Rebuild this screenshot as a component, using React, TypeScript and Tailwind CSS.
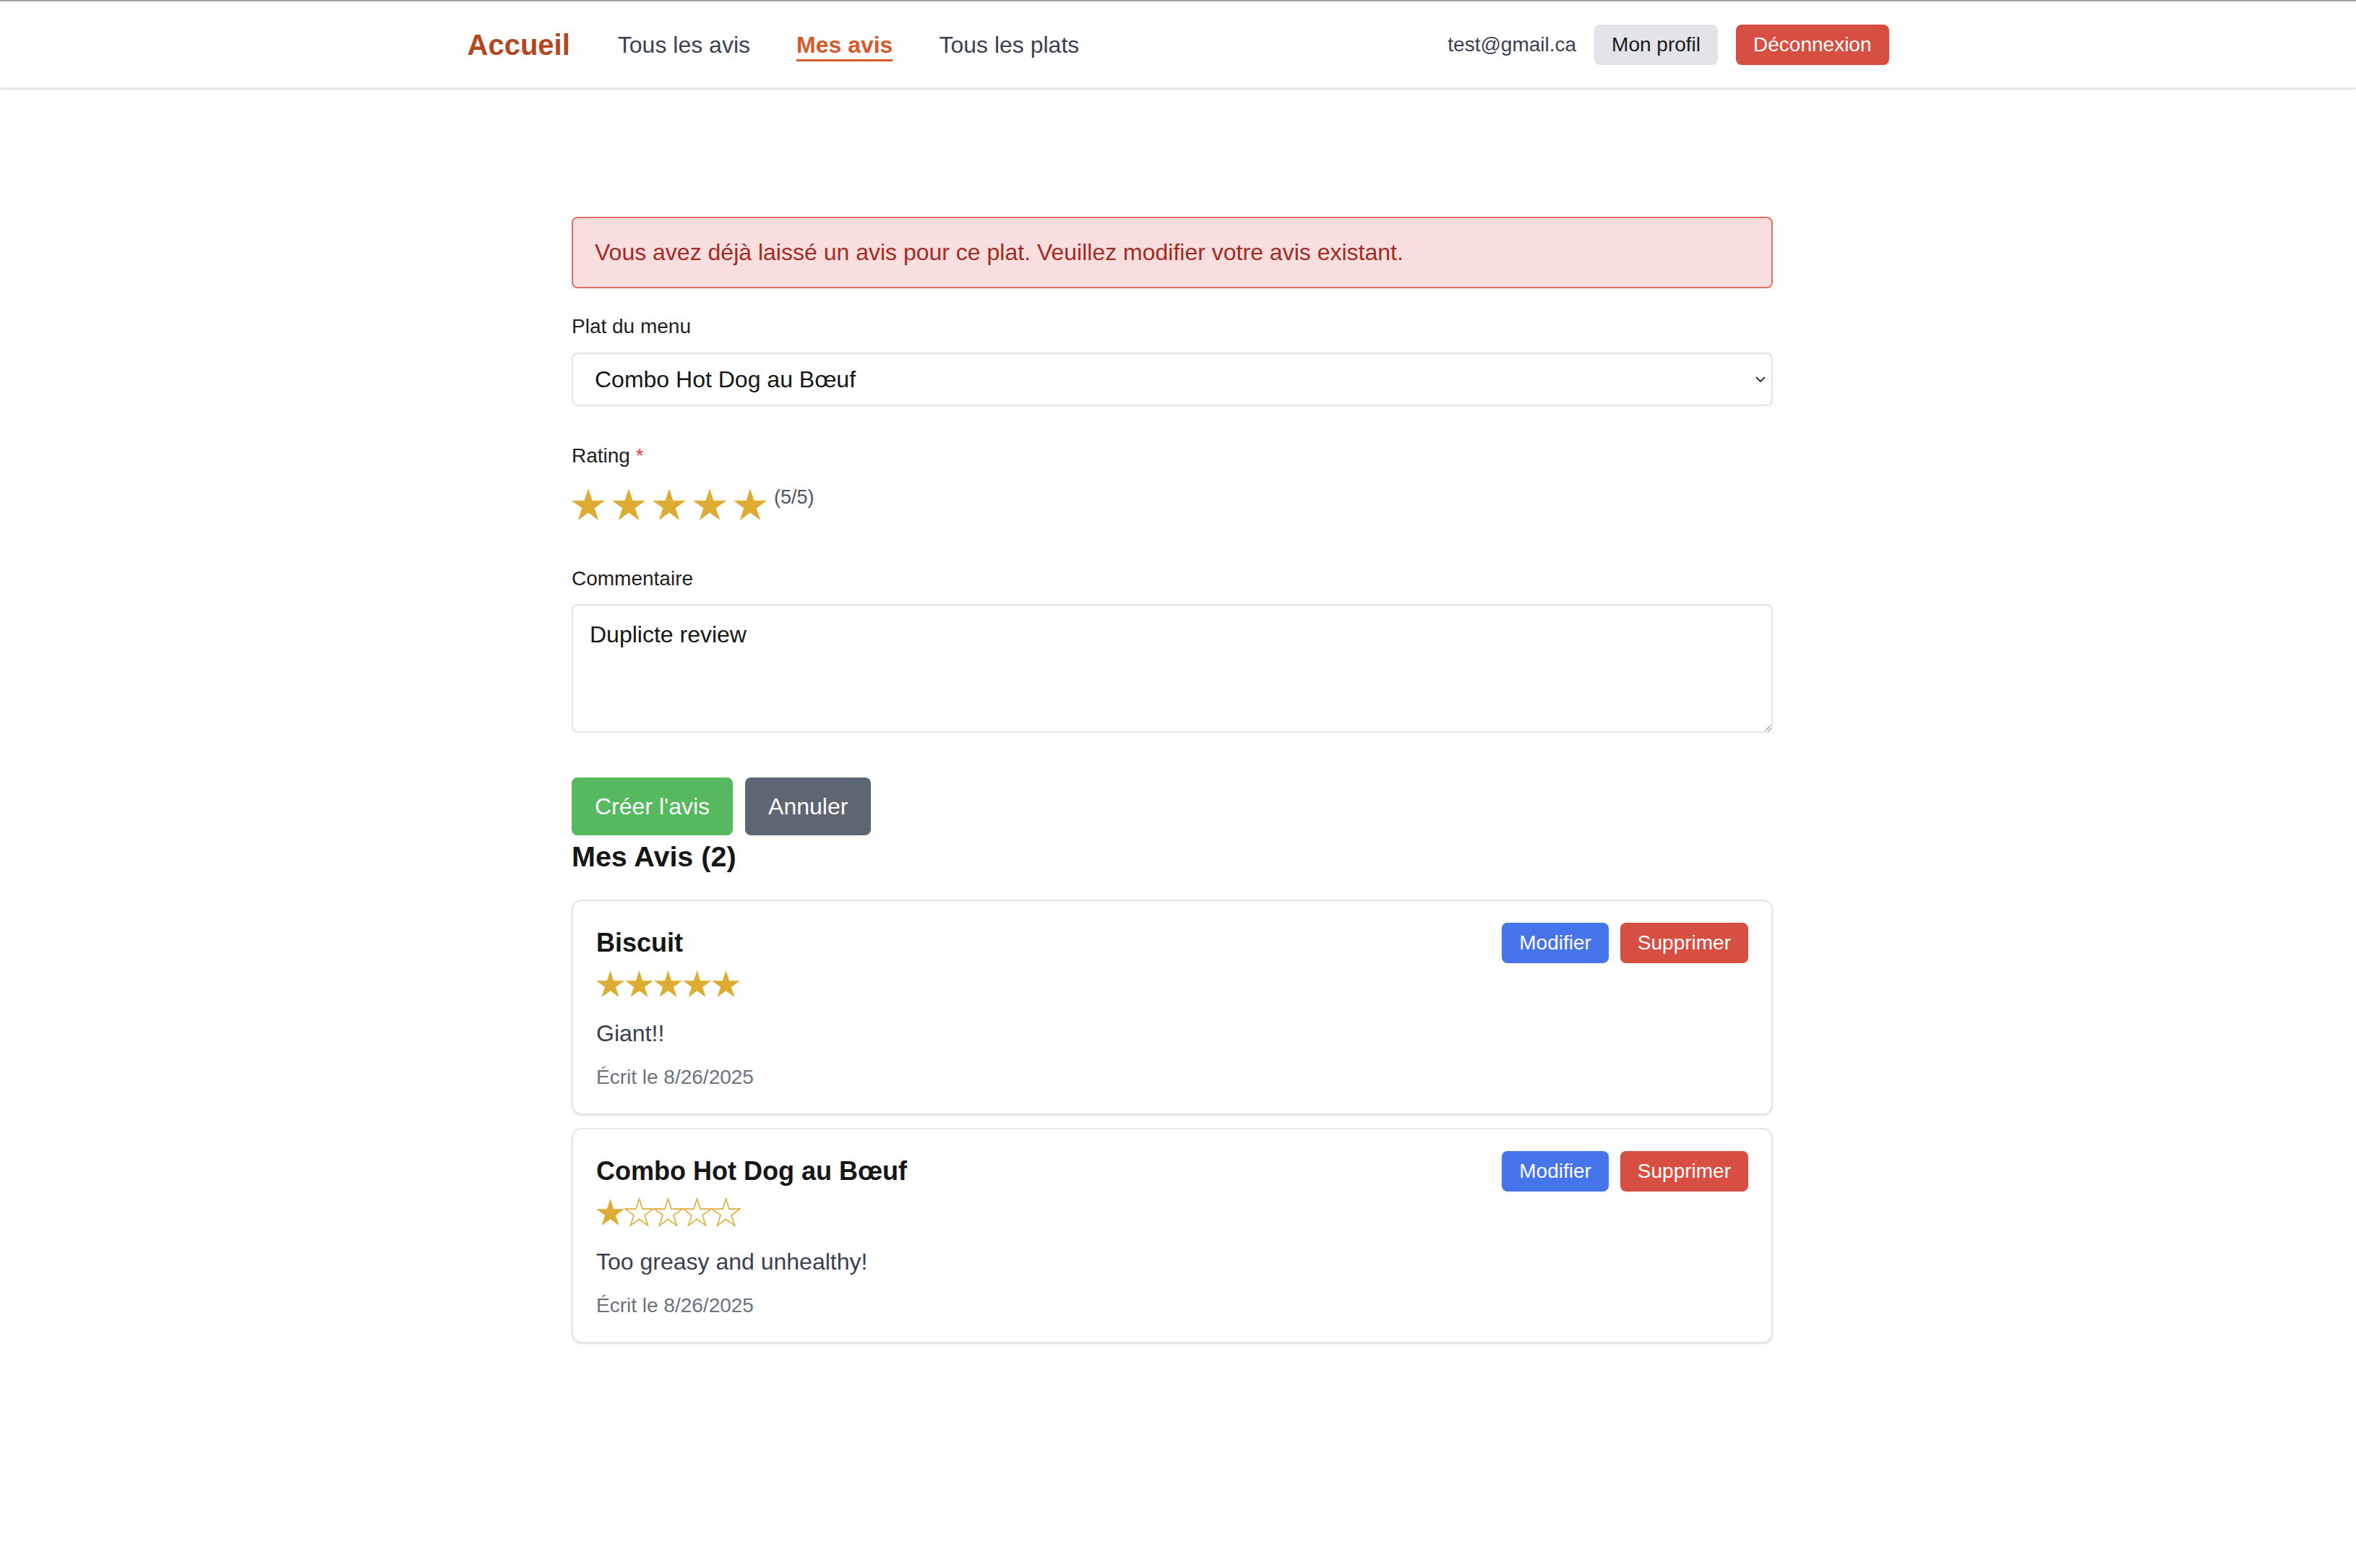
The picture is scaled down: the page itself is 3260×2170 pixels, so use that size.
import { useState } from 'react';

type Review = {
    id: number;
    dish: string;
    rating: number;
    comment: string;
    date: string;
};

const reviews: Review[] = [
    { id: 1, dish: 'Biscuit', rating: 5, comment: 'Giant!!', date: '8/26/2025' },
    { id: 2, dish: 'Combo Hot Dog au Bœuf', rating: 1, comment: 'Too greasy and unhealthy!', date: '8/26/2025' },
];

const STAR_POINTS = '50,0 61.8,36.3 100,36.3 69.1,58.8 80.9,95.1 50,72.6 19.1,95.1 30.9,58.8 0,36.3 38.2,36.3';

const Star = ({ filled, className }: { filled: boolean; className: string }) => (
    <svg viewBox="0 0 100 95" className={`overflow-visible ${className}`}>
        <polygon
            points={STAR_POINTS}
            fill={filled ? '#dfac33' : '#ffffff'}
            stroke="#dfac33"
            strokeWidth={filled ? 0 : 4}
        />
    </svg>
);

const Header = () => (
    <header className="bg-white border-b-2 border-[#e4e4ea] shadow-sm">
        <div className="h-[2px] bg-[#a3a89f]" />
        <nav className="w-[1967px] h-[119px] mx-auto flex items-center justify-between">
            <div className="flex items-center gap-[66px]">
                <span className="text-[40px] leading-[56px] font-bold text-[#b1461f]">Accueil</span>
                <div className="flex items-center gap-[64px] pt-[4px]">
                    <span className="text-[32px] leading-[40px] border-b-[3px] border-transparent text-[#3a4150]">Tous les avis</span>
                    <span className="text-[32px] leading-[40px] border-b-[3px] border-[#d65a28] font-bold text-[#d65a28]">Mes avis</span>
                    <span className="text-[32px] leading-[40px] border-b-[3px] border-transparent text-[#3a4150]">Tous les plats</span>
                </div>
            </div>
            <div className="flex items-center gap-[25px]">
                <span className="text-[28px] leading-[40px] text-[#3a4150]">test@gmail.ca</span>
                <button className="px-[24px] py-[8px] text-[28px] leading-[40px] rounded-[8px] bg-[#e2e4e9] text-[#1a1a1a]">Mon profil</button>
                <button className="px-[24px] py-[8px] text-[28px] leading-[40px] rounded-[8px] bg-[#d64f42] text-white">Déconnexion</button>
            </div>
        </nav>
    </header>
);

const ReviewCard = ({ review }: { review: Review }) => (
    <div className="bg-white border-2 border-[#e5e5ea] rounded-[14px] shadow-sm px-[32px] pt-[30px] pb-[30px]">
        <div className="flex items-start justify-between">
            <h3 className="text-[36px] leading-[56px] font-bold text-[#161616]">{review.dish}</h3>
            <div className="flex gap-[16px]">
                <button className="px-[24px] py-[8px] text-[28px] leading-[40px] rounded-[8px] bg-[#4674ea] text-white">Modifier</button>
                <button className="px-[24px] py-[8px] text-[28px] leading-[40px] rounded-[8px] bg-[#d64f42] text-white">Supprimer</button>
            </div>
        </div>
        <div className="flex gap-[1px] mt-[10px]">
            {[1, 2, 3, 4, 5].map(n => (
                <Star key={n} filled={n <= review.rating} className="w-[39px] h-[37px]" />
            ))}
        </div>
        <p className="mt-[26px] text-[32px] leading-[48px] text-[#374151]">{review.comment}</p>
        <p className="mt-[17px] text-[28px] leading-[40px] text-[#6b7280]">Écrit le {review.date}</p>
    </div>
);

const App = () => {
    const [rating, setRating] = useState(5);

    return (
        <div className="min-h-screen bg-white text-[#1f1f1f]" style={{ fontFamily: '"Liberation Sans", Arial, sans-serif' }}>
            <Header />

            <main className="flex justify-center pr-[16px] pt-[177px] pb-[120px]">
                <div className="w-[1662px]">
                    {/* Error */}
                    <div className="border-2 border-[#e76d69] bg-[#f8dede] rounded-[8px] px-[30px] py-[24px] text-[32px] leading-[47px] text-[#a52a22]">
                        Vous avez déjà laissé un avis pour ce plat. Veuillez modifier votre avis existant.
                    </div>

                    {/* Form */}
                    <label className="block mt-[33px] text-[28px] leading-[40px] text-[#1f1f1f]">Plat du menu</label>
                    <div className="relative mt-[16px]">
                        <select
                            className="w-full appearance-none bg-white border-2 border-[#e3e3e8] rounded-[8px] px-[30px] py-[11px] text-[32px] leading-[48px] text-[#161616]"
                            defaultValue="combo"
                        >
                            <option value="biscuit">Biscuit</option>
                            <option value="combo">Combo Hot Dog au Bœuf</option>
                        </select>
                        <svg viewBox="0 0 14 8" className="absolute right-[10px] top-[33px] w-[14px] h-[8px] pointer-events-none">
                            <path d="M1 1 L7 7 L13 1" fill="none" stroke="#2a2a2a" strokeWidth="1.8" />
                        </svg>
                    </div>

                    <label className="block mt-[49px] text-[28px] leading-[40px] text-[#1f1f1f]">
                        Rating <span className="text-[#e04040]">*</span>
                    </label>
                    <div className="flex items-start mt-[25px]">
                        <div className="flex gap-[10px]">
                            {[1, 2, 3, 4, 5].map(n => (
                                <button key={n} onClick={() => setRating(n)} className="block">
                                    <Star filled={n <= rating} className="w-[46px] h-[44px]" />
                                </button>
                            ))}
                        </div>
                        <span className="ml-[10px] -mt-[3px] text-[27px] leading-[30px] text-[#4b5563]">({rating}/5)</span>
                    </div>

                    <label className="block mt-[61px] text-[28px] leading-[40px] text-[#1f1f1f]">Commentaire</label>
                    <textarea
                        className="block w-full h-[178px] mt-[15px] border-2 border-[#e3e3e8] rounded-[8px] px-[23px] py-[16px] text-[32px] leading-[48px] text-[#161616]"
                        defaultValue="Duplicte review"
                    />

                    <div className="flex gap-[17px] mt-[62px]">
                        <button className="px-[32px] py-[16px] text-[32px] leading-[48px] rounded-[8px] bg-[#56b960] text-white">Créer l'avis</button>
                        <button className="px-[32px] py-[16px] text-[32px] leading-[48px] rounded-[8px] bg-[#5f6673] text-white">Annuler</button>
                    </div>

                    {/* My reviews */}
                    <h2 className="mt-[1px] text-[39.5px] leading-[56px] font-bold text-[#161616]">Mes Avis ({reviews.length})</h2>
                    <div className="mt-[32px] flex flex-col gap-[18px]">
                        {reviews.map(r => <ReviewCard key={r.id} review={r} />)}
                    </div>
                </div>
            </main>
        </div>
    );
};

export default App;
